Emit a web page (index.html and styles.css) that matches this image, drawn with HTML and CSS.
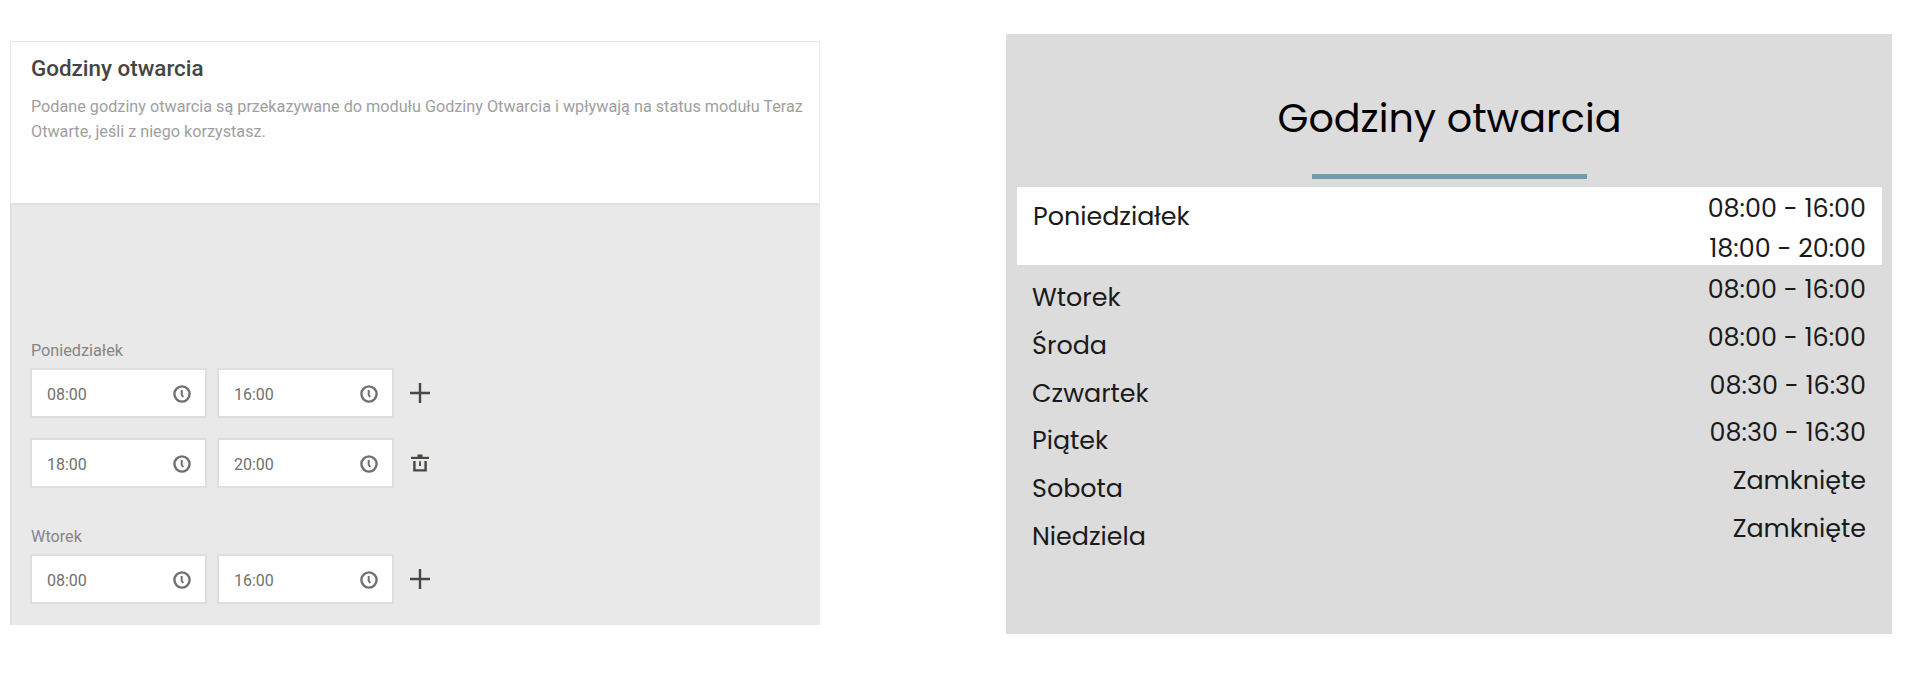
FILE: index.html
```html
<!DOCTYPE html>
<html lang="pl">
<head>
<meta charset="utf-8">
<title>Godziny otwarcia</title>
<link rel="stylesheet" href="styles.css">
</head>
<body>
<svg class="defs" aria-hidden="true">
  <symbol id="clock" viewBox="0 0 18 18"><circle cx="9" cy="9" r="7.6" fill="none" stroke="currentColor" stroke-width="2.4"/><path d="M8.7 5v4.8l1.5 2.2" fill="none" stroke="currentColor" stroke-width="2"/></symbol>
  <symbol id="plus" viewBox="0 0 20 20"><path d="M10 0v20M0 10h20" fill="none" stroke="currentColor" stroke-width="2.4"/></symbol>
  <symbol id="trash" viewBox="0 0 18 18"><path d="M0 3.9h18" fill="none" stroke="currentColor" stroke-width="2.2"/><path d="M3.4 7v9.4h11.2V7" fill="none" stroke="currentColor" stroke-width="2.4"/><path d="M6.5 3.2V.6h5v2.6zM8.1 7.2h1.8V12H8.1z" fill="currentColor"/></symbol>
</svg>
<main class="page">
  <section class="editor">
    <header class="editor-head">
      <h1 class="editor-title">Godziny otwarcia</h1>
      <p class="editor-text">Podane godziny otwarcia są przekazywane do modułu Godziny Otwarcia i wpływają na status modułu Teraz<br>Otwarte, jeśli z niego korzystasz.</p>
    </header>
    <div class="editor-body">
      <div class="day">
        <div class="label">Poniedziałek</div>
        <div class="slots">
          <div class="field">08:00<svg class="clock"><use href="#clock"/></svg></div>
          <div class="field">16:00<svg class="clock"><use href="#clock"/></svg></div>
          <svg class="plus"><use href="#plus"/></svg>
        </div>
        <div class="slots">
          <div class="field">18:00<svg class="clock"><use href="#clock"/></svg></div>
          <div class="field">20:00<svg class="clock"><use href="#clock"/></svg></div>
          <svg class="trash"><use href="#trash"/></svg>
        </div>
      </div>
      <div class="day">
        <div class="label">Wtorek</div>
        <div class="slots">
          <div class="field">08:00<svg class="clock"><use href="#clock"/></svg></div>
          <div class="field">16:00<svg class="clock"><use href="#clock"/></svg></div>
          <svg class="plus"><use href="#plus"/></svg>
        </div>
      </div>
    </div>
  </section>
  <section class="preview">
    <h2 class="preview-title">Godziny otwarcia</h2>
    <div class="rule"></div>
    <div class="row today"><span class="name">Poniedziałek</span><span class="times">08:00 - 16:00<br>18:00 - 20:00</span></div>
    <div class="row"><span class="name">Wtorek</span><span class="times">08:00 - 16:00</span></div>
    <div class="row"><span class="name">Środa</span><span class="times">08:00 - 16:00</span></div>
    <div class="row"><span class="name">Czwartek</span><span class="times">08:30 - 16:30</span></div>
    <div class="row"><span class="name">Piątek</span><span class="times">08:30 - 16:30</span></div>
    <div class="row"><span class="name">Sobota</span><span class="times">Zamknięte</span></div>
    <div class="row"><span class="name">Niedziela</span><span class="times">Zamknięte</span></div>
  </section>
</main>
</body>
</html>
```
FILE: styles.css
```css
* { box-sizing: border-box; }
body { margin: 0; background: #fff; font-family: Roboto, "Liberation Sans", sans-serif; }
.defs { position: absolute; width: 0; height: 0; }
.page { display: flex; justify-content: space-between; align-items: flex-start; width: 1920px; height: 698px; padding: 34px 28px 0 10px; }
.editor { width: 810px; height: 584px; margin-top: 7px; background: #e9e9e9; border-left: 2px solid #e0e0e0; }
.editor-head { height: 164px; margin-left: -2px; padding: 11px 0 0 20px; background: #fefefe; border: 1px solid #e9e9e9; border-bottom: 2px solid #e0e0e0; }
.editor-title { margin: 0; font-size: 22.4px; line-height: 30px; font-weight: 500; color: #444; white-space: nowrap; }
.editor-text { margin: 11px 0 0; font-size: 16.22px; line-height: 25px; color: #a0a0a0; white-space: nowrap; }
.editor-body { padding: 134px 0 0 18px; }
.day { margin-bottom: 37px; }
.label { height: 29px; padding-left: 1px; font-size: 16.2px; line-height: 24px; color: #858585; }
.slots { display: flex; align-items: center; height: 50px; gap: 10px; margin-bottom: 20px; }
.field { display: flex; align-items: center; justify-content: space-between; width: 177px; height: 50px; padding: 2px 14px 0 15px; background: #fff; border: 2px solid #dedede; font-size: 16px; color: #707070; }
.clock { width: 18px; height: 18px; margin-top: -1px; color: #707070; }
.plus { width: 20px; height: 20px; margin-left: 6px; color: #484848; }
.trash { width: 18px; height: 18px; margin-left: 7px; color: #484840; }
.preview { width: 886px; height: 600px; padding: 61px 10px 0 11px; background: #dcdcdc; font-family: Poppins, Inter, sans-serif; font-feature-settings: "cv11"; font-weight: 400; color: #1a1a1a; }
.preview-title { margin: 0; height: 46px; line-height: 46px; text-align: center; font-size: 39.7px; font-weight: 400; color: #000; }
.rule { width: 275px; height: 5px; margin: 33px 294px 8px 295px; background: #6f9fae; }
.row { display: flex; justify-content: space-between; height: 47.8px; padding: 0 16px 0 15px; font-size: 25.4px; line-height: 40px; white-space: nowrap; }
.name { padding-top: 12px; }
.times { padding-top: 4px; text-align: right; }
.today { height: 78px; margin-bottom: 0; padding-left: 16px; background: #fff; }
.today .name { padding-top: 9px; }
.today .times { padding-top: 1px; }
```
